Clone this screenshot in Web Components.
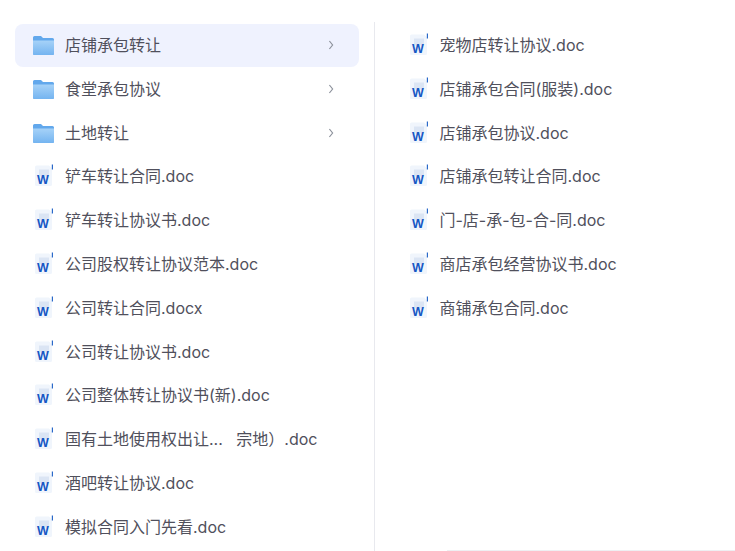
<!DOCTYPE html>
<html lang="zh">
<head>
<meta charset="utf-8">
<title>文件列表</title>
<style>
  html, body { margin: 0; height: 100%; background: #fff; overflow: hidden; }
</style>
</head>
<body>
<template id="file-row-template">
  <style>
    :host {
      display: flex;
      align-items: center;
      height: 43px;
      margin-bottom: 0.82px;
      padding: 0 24px 0 17px;
      border-radius: 8px;
      box-sizing: border-box;
      color: #50505c;
      font: 16px/24px Inter, "Noto Sans CJK SC", sans-serif;
    }
    :host([active]) { background: #eff2fe; }
    .icon { width: 24px; height: 24px; flex: none; display: block; margin-bottom: 1px; }
    .name { margin-left: 9px; margin-bottom: 1px; white-space: pre; flex: 1; }
    .arrow { width: 8px; height: 10px; flex: none; display: none; margin-bottom: 1px; }
    :host([type="folder"]) .arrow { display: block; }
  </style>
  <span class="icon" id="icon"></span>
  <span class="name"><slot></slot></span>
  <svg class="arrow" viewBox="0 0 8 10"><path d="M2.4 1 L5.6 5 L2.4 9" fill="none" stroke="#8d929c" stroke-width="1.2"/></svg>
</template>

<template id="file-panel-template">
  <style>
    :host { display: block; box-sizing: border-box; margin-top: 22px; padding-top: 1.9px; }
    :host([side="left"]) { width: 375px; padding-left: 15px; padding-right: 15px; border-right: 1px solid #e8e9ee; }
    :host([side="right"]) { flex: 1; padding-left: 14.5px; padding-right: 15px; }
  </style>
  <slot></slot>
</template>

<template id="file-browser-template">
  <style>
    :host { display: flex; height: 551px; box-sizing: border-box; position: relative; }
    .edge { position: absolute; left: 447px; right: 0; bottom: 0; height: 1px; background: #eeeff2; }
  </style>
  <slot></slot>
  <div class="edge"></div>
</template>

<file-browser>
  <file-panel side="left">
    <file-row type="folder" active>店铺承包转让</file-row>
    <file-row type="folder">食堂承包协议</file-row>
    <file-row type="folder">土地转让</file-row>
    <file-row>铲车转让合同.doc</file-row>
    <file-row>铲车转让协议书.doc</file-row>
    <file-row>公司股权转让协议范本.doc</file-row>
    <file-row>公司转让合同.docx</file-row>
    <file-row>公司转让协议书.doc</file-row>
    <file-row>公司整体转让协议书(新).doc</file-row>
    <file-row>国有土地使用权出让...&#160;&#160;&#160;宗地）.doc</file-row>
    <file-row>酒吧转让协议.doc</file-row>
    <file-row>模拟合同入门先看.doc</file-row>
  </file-panel>
  <file-panel side="right">
    <file-row>宠物店转让协议.doc</file-row>
    <file-row>店铺承包合同(服装).doc</file-row>
    <file-row>店铺承包协议.doc</file-row>
    <file-row>店铺承包转让合同.doc</file-row>
    <file-row>门-店-承-包-合-同.doc</file-row>
    <file-row>商店承包经营协议书.doc</file-row>
    <file-row>商铺承包合同.doc</file-row>
  </file-panel>
</file-browser>

<script>
  const FOLDER_ICON = `
    <svg width="24" height="24" viewBox="0 0 24 24">
      <defs>
        <linearGradient id="f" x1="0" y1="0" x2="0" y2="1">
          <stop offset="0" stop-color="#a6d2f8"/>
          <stop offset="1" stop-color="#74b4f0"/>
        </linearGradient>
      </defs>
      <path d="M1 4.5 Q1 3 2.5 3 H9 L11 5 H20.5 Q22 5 22 6.5 V20.5 Q22 22 20.5 22 H2.5 Q1 22 1 20.5 Z" fill="#62a8ec"/>
      <path d="M1 7.5 H22 V20.5 Q22 22 20.5 22 H2.5 Q1 22 1 20.5 Z" fill="url(#f)"/>
    </svg>`;

  const WORD_ICON = `
    <svg width="24" height="24" viewBox="0 0 24 24">
      <path d="M3 3 Q3 1.5 4.5 1.5 H17 L20 4.5 V20.5 Q20 22 18.5 22 H4.5 Q3 22 3 20.5 Z" fill="#f0f5fc"/>
      <rect x="7" y="5.5" width="10" height="7" fill="#dbe5f4"/>
      <rect x="19.8" y="0.5" width="1.2" height="5" fill="#2a69c9"/>
      <text x="5" y="19.5" font-family="'Liberation Sans', sans-serif" font-size="12.5" font-weight="700" fill="#1557c4">W</text>
    </svg>`;

  class FileRow extends HTMLElement {
    constructor() {
      super();
      this.attachShadow({ mode: 'open' });
      const tpl = document.getElementById('file-row-template');
      this.shadowRoot.appendChild(tpl.content.cloneNode(true));
    }

    connectedCallback() {
      const isFolder = this.getAttribute('type') === 'folder';
      this.shadowRoot.getElementById('icon').innerHTML = isFolder ? FOLDER_ICON : WORD_ICON;
    }
  }

  class FilePanel extends HTMLElement {
    constructor() {
      super();
      this.attachShadow({ mode: 'open' });
      const tpl = document.getElementById('file-panel-template');
      this.shadowRoot.appendChild(tpl.content.cloneNode(true));
    }
  }

  class FileBrowser extends HTMLElement {
    constructor() {
      super();
      this.attachShadow({ mode: 'open' });
      const tpl = document.getElementById('file-browser-template');
      this.shadowRoot.appendChild(tpl.content.cloneNode(true));
    }
  }

  customElements.define('file-row', FileRow);
  customElements.define('file-panel', FilePanel);
  customElements.define('file-browser', FileBrowser);
</script>
</body>
</html>
